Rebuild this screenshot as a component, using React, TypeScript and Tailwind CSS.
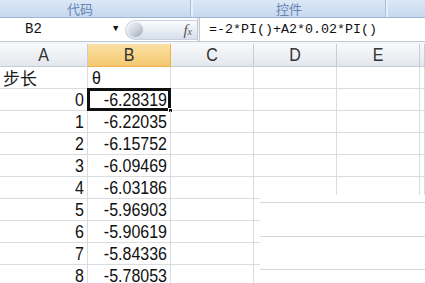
import React from "react";

const values = [
  "-6.28319",
  "-6.22035",
  "-6.15752",
  "-6.09469",
  "-6.03186",
  "-5.96903",
  "-5.90619",
  "-5.84336",
  "-5.78053",
];

const cols = ["A", "B", "C", "D", "E", ""];

function Num({ children }: { children: React.ReactNode }) {
  return (
    <span className="inline-block scale-y-[1.14] text-[16px] leading-none text-[#111]">
      {children}
    </span>
  );
}

export default function App() {
  return (
    <div className="relative w-[425px] h-[283px] overflow-hidden bg-white font-['Liberation_Sans',_sans-serif]">
      {/* Ribbon group labels */}
      <div className="flex h-[18px] border-b border-[#9fb6d2] bg-gradient-to-b from-[#dde8f6] to-[#c6d8ef]">
        <div className="flex w-[190px] items-center justify-center pr-[30px] text-[13px] leading-none text-[#6585b3] font-['Noto_Sans_CJK_SC',_sans-serif]">
          代码
        </div>
        <div className="w-[3px] border-l border-[#a9bed8] bg-[#e6eef8]" />
        <div className="flex w-[192px] items-center justify-center text-[13px] leading-none text-[#6585b3] font-['Noto_Sans_CJK_SC',_sans-serif]">
          控件
        </div>
        <div className="w-[3px] border-l border-[#a9bed8] bg-[#e6eef8]" />
        <div className="flex-1" />
      </div>

      {/* Formula bar */}
      <div className="flex h-[24px] items-center border-b border-[#c3cbd6] bg-white">
        <div className="relative flex h-full w-[121px] items-center pl-[25px] font-['Liberation_Mono',_monospace] text-[14px] text-[#111]">
          B2
          <span className="absolute left-[113px] top-[7px] text-[9px] leading-none text-[#111]">▼</span>
        </div>
        <div className="relative ml-[4px] flex h-[20px] w-[72px] items-center rounded-l-full border border-r-0 border-[#c9d2de] bg-gradient-to-b from-[#fbfcfe] via-[#e9eef5] to-[#d7dfea]">
          <div className="ml-[2px] h-[15px] w-[15px] rounded-full bg-gradient-to-br from-[#f4f6f9] via-[#c9d0d9] to-[#8e98a6] opacity-80" />
          <span className="absolute right-[5px] top-[1px] font-['Liberation_Serif',_serif] italic text-[#555] leading-none">
            <span className="text-[15px]">f</span>
            <span className="text-[10px]">x</span>
          </span>
        </div>
        <div className="h-full w-[3px] border-l border-r border-[#c3cbd6] bg-[#eef2f7]" />
        <div className="flex h-full flex-1 items-center pl-[9px] font-['Liberation_Mono',_monospace] text-[13.33px] text-[#111]">
          =-2*PI()+A2*0.02*PI()
        </div>
      </div>

      <div className="h-[2px] bg-[#f4f6f9]" />

      {/* Grid */}
      <div className="grid grid-cols-[88px_83px_83px_83px_83px_1fr]">
        {cols.map((c, i) => (
          <div
            key={"h" + i}
            className={
              "flex h-[23px] items-center justify-center border-r border-b text-[16px] leading-none " +
              (c === "B"
                ? "border-[#f0b350] bg-gradient-to-b from-[#fbe1a4] to-[#f5c86f] text-[#333]"
                : "border-[#c5cdd9] bg-gradient-to-b from-[#f8f9fb] to-[#e3e7ed] text-[#333]")
            }
          >
            {c && <span className="inline-block scale-y-[1.14]">{c}</span>}
          </div>
        ))}

        {/* Row 1 */}
        <div className="flex h-[22px] items-center border-r border-b border-[#dadcdd] pl-[3px] text-[17px] leading-none text-[#1a1a1a] font-['Noto_Sans_CJK_SC',_sans-serif]">
          步长
        </div>
        <div className="flex h-[22px] items-center border-r border-b border-[#dadcdd] pl-[4px] text-[16px] leading-none text-[#1a1a1a]">
          <Num>θ</Num>
        </div>
        {[0, 1, 2, 3].map((k) => (
          <div key={"r1" + k} className="h-[22px] border-r border-b border-[#dadcdd]" />
        ))}

        {values.map((v, i) => (
          <React.Fragment key={"row" + i}>
            <div className="flex h-[22px] items-center justify-end border-r border-b border-[#dadcdd] pr-[3px]">
              <Num>{i}</Num>
            </div>
            <div className="relative flex h-[22px] items-center justify-end border-r border-b border-[#dadcdd] pr-[3px]">
              <Num>{v}</Num>
              {i === 0 && (
                <>
                  <div className="absolute -left-[1px] -top-[1px] -right-[1px] -bottom-[1px] border-[3px] border-[#111]" />
                  <div className="absolute -right-[3px] -bottom-[3px] h-[5px] w-[5px] border border-white bg-[#111]" />
                </>
              )}
            </div>
            {[0, 1, 2, 3].map((k) => (
              <div key={"c" + k} className="h-[22px] border-r border-b border-[#dadcdd]" />
            ))}
          </React.Fragment>
        ))}
      </div>

      {/* pasted white patch at bottom-right */}
      <div className="absolute left-[260px] top-[195px] right-0 bottom-0 bg-white">
        <div className="mt-[7px] h-px bg-[#d6d6d6]" />
        <div className="mt-[33px] h-px bg-[#d6d6d6]" />
        <div className="mt-[32px] h-px bg-[#d6d6d6]" />
      </div>
    </div>
  );
}
